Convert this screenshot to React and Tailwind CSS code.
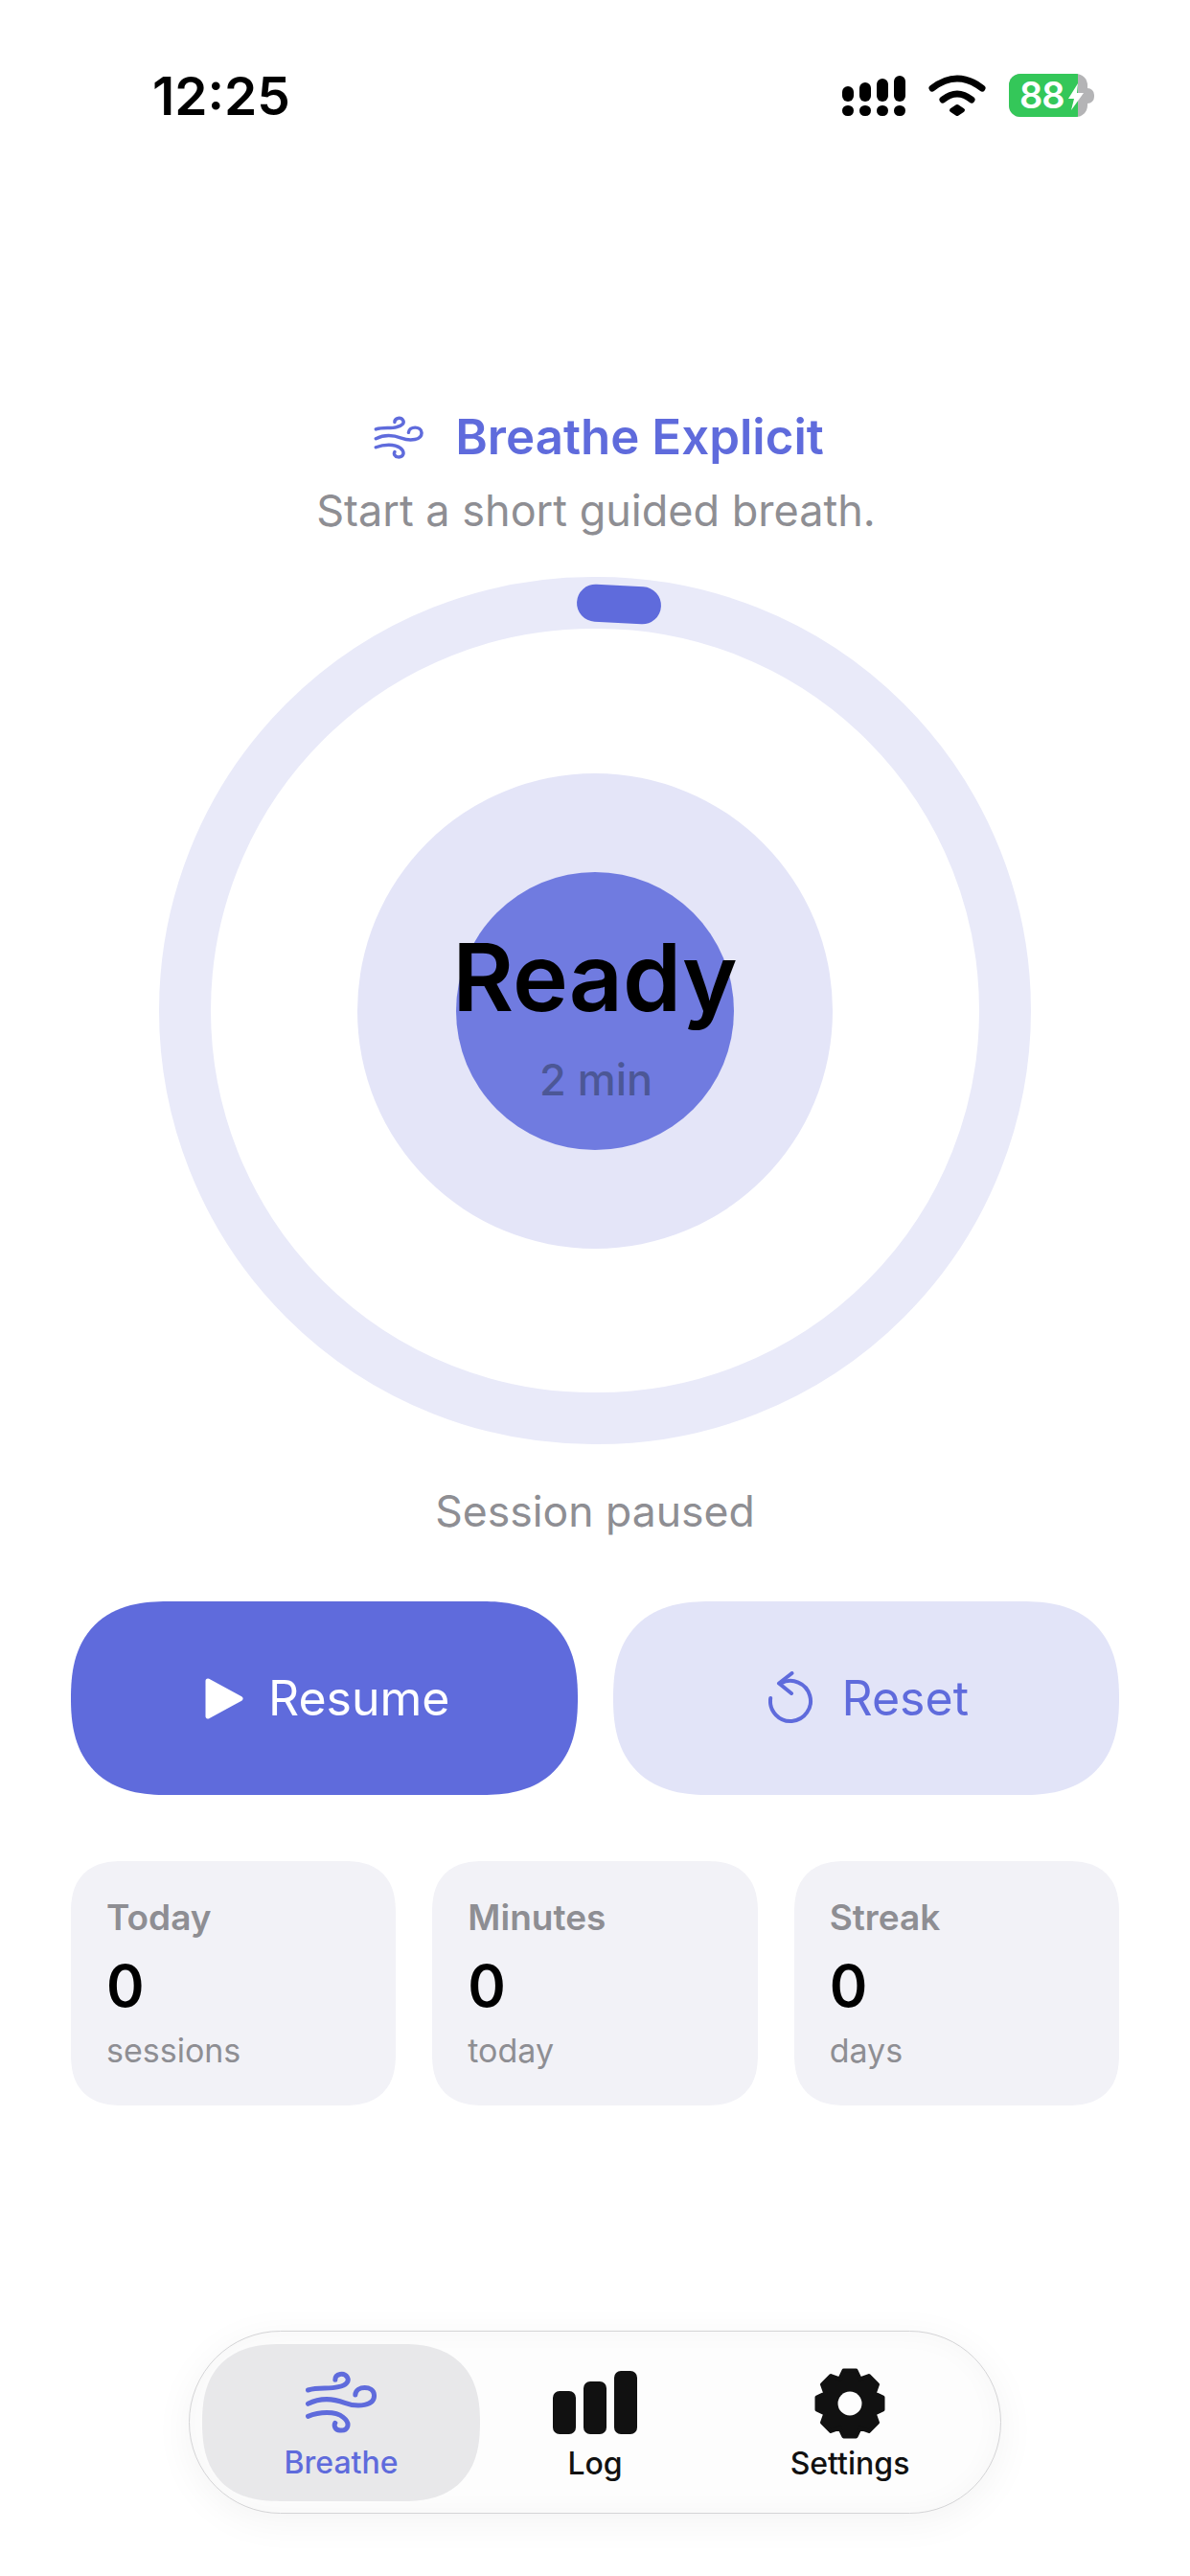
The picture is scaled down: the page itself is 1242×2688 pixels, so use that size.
const font = { fontFamily: 'Inter, sans-serif' };

function WindIcon({ className }) {
  return (
    <svg viewBox="55 40 230 195" fill="none" stroke="currentColor" strokeWidth="15" strokeLinecap="round" className={className}>
      <path d="M65 100C100 90 130 98 160 90C185 85 195 72 188 60C178 44 150 48 150 68" />
      <path d="M65 143C100 125 140 125 180 140C220 155 275 150 272 115C270 85 215 85 213 115" />
      <path d="M65 182C100 168 150 165 175 185C200 205 190 228 165 226C150 225 145 212 150 203" />
    </svg>
  );
}

// eight teeth around a ring, corners softened by the round stroke
function gearPath() {
  const pts = [];
  for (let i = 0; i < 8; i++) {
    const a = (i * Math.PI) / 4;
    const at = (r, off) => {
      const x = 37 + r * Math.sin(a) + off * Math.cos(a);
      const y = 37 - r * Math.cos(a) + off * Math.sin(a);
      return `${x.toFixed(2)} ${y.toFixed(2)}`;
    };
    pts.push(at(25, -11), at(34.500, -6.500), at(34.500, 6.500), at(25, 11));
  }
  return `M${pts.join('L')}Z`;
}

function GearIcon({ className }) {
  return (
    <svg viewBox="0 0 74 74" className={className}>
      <path d={gearPath()} fill="currentColor" stroke="currentColor" strokeWidth="4" strokeLinejoin="round" />
      <circle cx="37" cy="37" r="12.500" fill="#fdfdfd" />
    </svg>
  );
}

function ResetIcon({ className }) {
  return (
    <svg viewBox="0 0 50 56" fill="none" stroke="currentColor" strokeWidth="4" strokeLinecap="round" strokeLinejoin="round" className={className}>
      <path d="M13 12.500A21 21 0 1 1 2.200 28" />
      <path d="M24.500 2L11 12.500L24 23" />
    </svg>
  );
}

function SignalIcon() {
  return (
    <div className="flex items-end gap-[6px]">
      {[16, 20, 24, 27].map((h, i) => (
        <div key={i} className="flex w-[12px] flex-col gap-[4px]">
          <div className="rounded-full bg-black" style={{ height: h }} />
          <div className="h-[11px] rounded-full bg-black" />
        </div>
      ))}
    </div>
  );
}

function WifiIcon() {
  return (
    <svg viewBox="0 0 60 44" className="h-[44px] w-[60px]" fill="none" stroke="black" strokeWidth="7" strokeLinecap="round">
      <path d="M4 14Q30 -6 56 14" />
      <path d="M15 26Q30 14 45 26" />
      <path d="M24 37L30 33L36 37L30 41Z" fill="black" strokeWidth="4" strokeLinejoin="round" />
    </svg>
  );
}

function Battery() {
  return (
    <div className="flex h-[45px] items-center">
      <div className="relative flex h-[45px] w-[82px] overflow-hidden rounded-[12px] bg-[#b4b4b6]">
        <div className="flex h-full w-[72px] items-center bg-[#34c759] pl-[11px] text-[38px] font-semibold tracking-[-1px] text-white">88</div>
        <svg viewBox="0 0 16 28" className="absolute left-[62px] top-[10px] h-[28px] w-[16px]" fill="white">
          <path d="M10 0L0 16h6l-3 12L16 10H9z" />
        </svg>
      </div>
      <div className="h-[16px] w-[7px] rounded-r-full bg-[#b4b4b6]" />
    </div>
  );
}

function StatCard({ label, value, unit }) {
  return (
    <div className="flex h-[255px] flex-col rounded-[54px] bg-[#f2f2f7] px-[37px] pt-[37px] [corner-shape:superellipse(1.3)]">
      <div className="text-[37px] font-semibold leading-[44px] text-[#8e8e93]">{label}</div>
      <div className="mt-[13px] text-[60px] font-semibold leading-[72px] text-black">{value}</div>
      <div className="mt-[10px] text-[34px] leading-[44px] text-[#8e8e93]">{unit}</div>
    </div>
  );
}

export default function App() {
  return (
    <div className="flex min-h-[2688px] w-[1242px] flex-col bg-white" style={font}>
      <div className="flex h-[200px] items-start justify-between pl-[159px] pr-[100px] pt-[68px]">
        <div className="text-[55px] font-semibold leading-[64px] text-black">12:25</div>
        <div className="flex items-center gap-[24px] pt-[9px]">
          <SignalIcon />
          <WifiIcon />
          <Battery />
        </div>
      </div>

      <div className="mt-[225px] flex items-center justify-center gap-[32px] pl-[8px] text-[#5f6bdc]">
        <WindIcon className="h-[45px] w-[53px]" />
        <div className="text-[51px] font-semibold leading-[62px]">Breathe Explicit</div>
      </div>
      <div className="mt-[19px] pl-[2px] text-center text-[45px] leading-[54px] text-[#8e8e93]">Start a short guided breath.</div>

      <div className="relative mx-auto mt-[42px] flex h-[905px] w-[910px] items-center justify-center rounded-full border-[54px] border-[#e9eaf9] bg-white">
        <div className="absolute left-1/2 top-[-45px] h-[39px] w-[88px] -translate-x-[19px] rotate-[3deg] rounded-full bg-[#5f6bdc]" />
        <div className="flex h-[496px] w-[496px] items-center justify-center rounded-full bg-[#e4e5f8]">
          <div className="relative flex h-[290px] w-[290px] flex-col items-center rounded-full bg-[#707be0]">
            <div className="mt-[52px] whitespace-nowrap text-[98px] font-semibold leading-[116px] text-black">Ready</div>
            <div className="mt-[22px] pl-[2px] text-[45px] font-medium leading-[54px] text-[#4c5796]">2 min</div>
          </div>
        </div>
      </div>

      <div className="mt-[43px] text-center text-[44.5px] leading-[54px] text-[#8e8e93]">Session paused</div>

      <div className="mt-[67px] grid grid-cols-2 gap-[37px] px-[74px]">
        <div className="flex h-[202px] items-center justify-center gap-[26px] rounded-[101px] bg-[#5f6bdc] pl-[7px] text-white [corner-shape:superellipse(1.3)]">
          <svg viewBox="0 0 40 43" className="h-[43px] w-[40px]" fill="white" stroke="white" strokeWidth="5" strokeLinejoin="round">
            <path d="M3 3L37 21.500L3 40Z" />
          </svg>
          <span className="text-[50px] leading-[60px]">Resume</span>
        </div>
        <div className="flex h-[202px] items-center justify-center gap-[27px] rounded-[101px] bg-[#e2e4f8] pl-[5px] text-[#5f6bdc] [corner-shape:superellipse(1.3)]">
          <ResetIcon className="h-[56px] w-[50px]" />
          <span className="text-[50px] leading-[60px]">Reset</span>
        </div>
      </div>

      <div className="mt-[69px] grid grid-cols-3 gap-[38px] px-[74px]">
        <StatCard label="Today" value="0" unit="sessions" />
        <StatCard label="Minutes" value="0" unit="today" />
        <StatCard label="Streak" value="0" unit="days" />
      </div>

      <div className="mx-auto mt-[235px] grid h-[191px] w-[848px] grid-cols-[290px_240px_292px] items-center rounded-[96px] border border-[#d4d4d6] bg-[#fdfdfd] px-[13px] shadow-[0_8px_40px_rgba(0,0,0,0.05),inset_0_0_30px_rgba(0,0,0,0.03)]">
        <div className="flex h-[164px] flex-col items-center justify-center rounded-[82px] bg-[#e8e8ea] pt-[6px] text-[#5f6bdc] [corner-shape:superellipse(1.3)]">
          <WindIcon className="h-[65px] w-[77px]" />
          <span className="mt-[13px] text-[32px] font-medium leading-[36px]">Breathe</span>
        </div>
        <div className="flex flex-col items-center pt-[8px] text-[#111111]">
          <div className="flex h-[66px] items-end gap-[8px]">
            <div className="h-[45px] w-[24px] rounded-[7px] bg-[#111111]" />
            <div className="h-[55px] w-[24px] rounded-[7px] bg-[#111111]" />
            <div className="h-[66px] w-[24px] rounded-[7px] bg-[#111111]" />
          </div>
          <span className="mt-[13px] text-[32px] font-medium leading-[36px]">Log</span>
        </div>
        <div className="flex flex-col items-center pt-[4px] text-[#111111]">
          <GearIcon className="h-[74px] w-[74px]" />
          <span className="mt-[8px] text-[32px] font-medium leading-[36px]">Settings</span>
        </div>
      </div>
    </div>
  );
}
